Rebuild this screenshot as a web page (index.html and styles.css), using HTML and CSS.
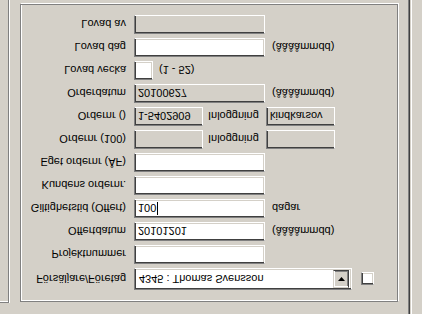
FILE: index.html
```html
<!DOCTYPE html>
<html>

<head>
    <title>Order</title>
    <link rel="stylesheet" href="styles.css">
</head>

<body>

    <div class="screen">
        <div class="panel-left"></div>

        <div class="group">
            <div class="row combo-row">
                <span class="lbl">Försäljare/Företag</span>
                <div class="combo">
                    <span class="combo-text">4345 : Thomas Svensson</span>
                    <span class="combo-btn">
                        <svg width="7" height="4" viewBox="0 0 7 4"><polygon points="0,0 7,0 3.5,4" fill="#000"/></svg>
                    </span>
                </div>
                <span class="check"></span>
            </div>
            <div class="row">
                <span class="lbl">Projektnummer</span>
                <span class="field"></span>
            </div>
            <div class="row">
                <span class="lbl">Offertdatum</span>
                <span class="field">20101201</span>
                <span class="hint">(ååååmmdd)</span>
            </div>
            <div class="row">
                <span class="lbl">Giltighetstid (Offert)</span>
                <span class="field">100<span class="caret"></span></span>
                <span class="hint">dagar</span>
            </div>
            <div class="row">
                <span class="lbl">Kundens ordernr.</span>
                <span class="field"></span>
            </div>
            <div class="row">
                <span class="lbl">Eget ordernr (ÅF)</span>
                <span class="field"></span>
            </div>
            <div class="row">
                <span class="lbl">Ordernr (100)</span>
                <span class="field short disabled"></span>
                <span class="mid">Inloggning</span>
                <span class="field short disabled"></span>
            </div>
            <div class="row">
                <span class="lbl">Ordernr ()</span>
                <span class="field short disabled">1-5402909</span>
                <span class="mid">Inloggning</span>
                <span class="field short disabled">kindkarsov</span>
            </div>
            <div class="row">
                <span class="lbl">Orderdatum</span>
                <span class="field disabled">20100627</span>
                <span class="hint">(ååååmmdd)</span>
            </div>
            <div class="row">
                <span class="lbl">Lovad vecka</span>
                <span class="field tiny"></span>
                <span class="hint near">(1 - 52)</span>
            </div>
            <div class="row">
                <span class="lbl">Lovad dag</span>
                <span class="field"></span>
                <span class="hint">(ååååmmdd)</span>
            </div>
            <div class="row">
                <span class="lbl">Lovad av</span>
                <span class="field disabled"></span>
            </div>
        </div>

        <div class="panel-right"></div>
    </div>

</body>

</html>
```

FILE: styles.css
```css
* {
    box-sizing: border-box;
}

body {
    margin: 0;
    background-color: #d4d0c8;
    font-family: "Liberation Sans", Arial, sans-serif;
    font-size: 11px;
    color: #000;
}

/* the whole window is shown upside down */
.screen {
    width: 422px;
    height: 314px;
    display: flex;
    overflow: hidden;
    background-color: #d4d0c8;
    transform: scaleY(-1);
}

.panel-left {
    flex: none;
    width: 9px;
    margin-top: 11px;
    border-top: 1px solid #808080;
    border-right: 1px solid #808080;
    box-shadow: inset 0 1px #fff, 1px 0 #fff;
}

.group {
    flex: none;
    width: 378px;
    height: 298px;
    margin: 12px 0 0 11px;
    padding-top: 11px;
    border: 1px solid #808080;
    box-shadow: 1px 1px 0 #fff, inset 1px 1px 0 #fff;
    display: flex;
    flex-direction: column;
    gap: 4px;
}

.panel-right {
    flex: none;
    width: 14px;
    margin-left: auto;
    border-left: 1px solid #808080;
    box-shadow: inset 1px 0 #404040, inset 2px 0 #d4d0c8, inset 3px 0 #fff;
}

.row {
    display: flex;
    align-items: center;
    height: 19px;
    white-space: nowrap;
}

.combo-row {
    height: 22px;
}

.lbl {
    flex: none;
    width: 105px;
    margin-right: 8px;
    text-align: right;
}

.field {
    flex: none;
    display: flex;
    align-items: center;
    width: 131px;
    height: 19px;
    padding-left: 3px;
    background-color: #fff;
    border: 1px solid;
    border-color: #808080 #fff #fff #808080;
    box-shadow: inset 1px 1px #404040, inset -1px -1px #d4d0c8;
}

.field.disabled {
    background-color: #d4d0c8;
}

.field.short {
    width: 69px;
}

.field.tiny {
    width: 19px;
}

.caret {
    width: 1px;
    height: 13px;
    margin-left: 1px;
    background-color: #000;
}

.hint {
    margin-left: 7px;
}

.hint.near {
    margin-left: 6px;
}

.mid {
    flex: none;
    width: 63px;
    padding-left: 5px;
}

.combo {
    flex: none;
    display: flex;
    align-items: center;
    width: 218px;
    height: 22px;
    padding: 2px;
    background-color: #fff;
    border: 1px solid;
    border-color: #808080 #fff #fff #808080;
    box-shadow: inset 1px 1px #404040, inset -1px -1px #d4d0c8;
}

.combo-text {
    flex: 1;
    padding-left: 2px;
}

.combo-btn {
    display: flex;
    align-items: center;
    justify-content: center;
    width: 16px;
    height: 18px;
    margin-top: -1px;
    background-color: #d4d0c8;
    border: 1px solid;
    border-color: #d4d0c8 #404040 #404040 #d4d0c8;
    box-shadow: inset 1px 1px #fff, inset -1px -1px #808080;
}

.check {
    flex: none;
    width: 13px;
    height: 13px;
    margin-left: 9px;
    background-color: #fff;
    border: 1px solid;
    border-color: #808080 #fff #fff #808080;
    box-shadow: inset 1px 1px #404040, inset -1px -1px #d4d0c8;
}
```
